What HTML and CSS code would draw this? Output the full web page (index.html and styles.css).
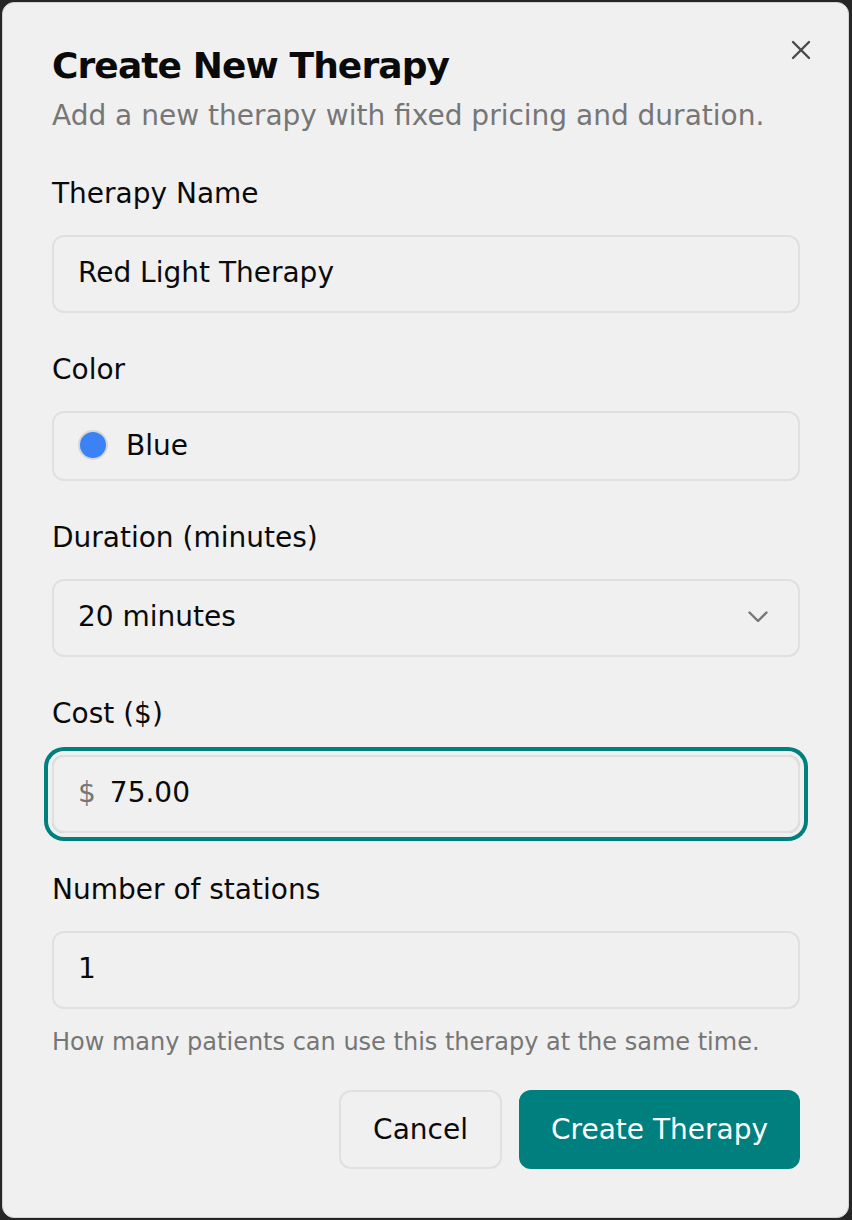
FILE: index.html
```html
<!DOCTYPE html>
<html lang="en">
<head>
<meta charset="utf-8">
<title>Create New Therapy</title>
<link rel="stylesheet" href="styles.css">
</head>
<body>
<div class="dialog" role="dialog" aria-labelledby="dlg-title">
  <button class="close" type="button" aria-label="Close">
    <svg width="20" height="20" viewBox="0 0 20 20" fill="none" stroke="currentColor" stroke-width="2.4" stroke-linecap="round">
      <line x1="2" y1="2" x2="18" y2="18"/>
      <line x1="18" y1="2" x2="2" y2="18"/>
    </svg>
  </button>
  <header class="dialog-header">
    <h2 id="dlg-title" class="dialog-title">Create New Therapy</h2>
    <p class="dialog-desc">Add a new therapy with fixed pricing and duration.</p>
  </header>
  <form class="form">
    <div class="field">
      <label class="label" for="name">Therapy Name</label>
      <input class="input" id="name" type="text" value="Red Light Therapy">
    </div>
    <div class="field">
      <span class="label">Color</span>
      <button type="button" class="color-select">
        <span class="swatch"></span>
        <span>Blue</span>
      </button>
    </div>
    <div class="field">
      <span class="label">Duration (minutes)</span>
      <button type="button" class="select">
        <span>20 minutes</span>
        <svg class="chevron" width="20" height="12" viewBox="0 0 20 12" fill="none" stroke="currentColor" stroke-width="2.4" stroke-linecap="round" stroke-linejoin="round">
          <polyline points="1.5,1.5 10,10 18.5,1.5"/>
        </svg>
      </button>
    </div>
    <div class="field">
      <label class="label" for="cost">Cost ($)</label>
      <div class="input-group focused">
        <span class="prefix">$</span>
        <input class="bare-input" id="cost" type="text" value="75.00">
      </div>
    </div>
    <div class="field">
      <label class="label" for="stations">Number of stations</label>
      <input class="input" id="stations" type="text" value="1">
      <p class="help">How many patients can use this therapy at the same time.</p>
    </div>
  </form>
  <footer class="actions">
    <button type="button" class="btn btn-outline">Cancel</button>
    <button type="button" class="btn btn-primary">Create Therapy</button>
  </footer>
</div>
</body>
</html>
```
FILE: styles.css
```css
* { box-sizing: border-box; }

html, body {
  margin: 0;
  padding: 0;
}

body {
  background: #262626;
  width: 852px;
  height: 1220px;
  overflow: hidden;
  font-family: "DejaVu Sans", "Noto Sans", sans-serif;
  color: #0a0a0a;
  padding: 2px;
}

.dialog {
  position: relative;
  width: 847px;
  height: 1216px;
  background: #f0f0f0;
  border: 1px solid #d2d2d2;
  border-radius: 12px;
  padding: 45px 48px 0 49px;
  display: flex;
  flex-direction: column;
}

.close {
  position: absolute;
  top: 37px;
  right: 37px;
  width: 20px;
  height: 20px;
  padding: 0;
  border: 0;
  background: none;
  color: #4a4a4a;
  display: flex;
}

.dialog-header {
  display: flex;
  flex-direction: column;
  gap: 12px;
}

.dialog-title {
  margin: 0;
  font-size: 36px;
  line-height: 36px;
  font-weight: 700;
  letter-spacing: -0.9px;
  color: #0a0a0a;
}

.dialog-desc {
  margin: 0;
  font-size: 28px;
  line-height: 40px;
  color: #767676;
}

.form {
  margin-top: 44px;
  display: flex;
  flex-direction: column;
  gap: 43px;
}

.field {
  display: flex;
  flex-direction: column;
}

.label {
  font-size: 28px;
  line-height: 28px;
  margin-bottom: 27px;
  color: #0a0a0a;
}

.input,
.input-group,
.select,
.color-select {
  width: 100%;
  height: 78px;
  border: 2px solid #e0e0e0;
  border-radius: 12px;
  background: transparent;
  font-family: inherit;
  font-size: 28px;
  color: #0a0a0a;
  padding: 0 24px;
  margin: 0;
}

.input {
  outline: none;
  padding-bottom: 3px;
}

.color-select {
  height: 70px;
  display: flex;
  align-items: center;
  gap: 18px;
  text-align: left;
  padding-bottom: 2px;
}

.swatch {
  width: 30px;
  height: 30px;
  border-radius: 50%;
  background: #3b82f6;
  border: 2px solid #d6d6d6;
  flex: none;
}

.select {
  display: flex;
  align-items: center;
  justify-content: space-between;
  padding-right: 30px;
  padding-bottom: 3px;
  text-align: left;
}

.chevron {
  color: #767676;
  flex: none;
}

.input-group {
  display: flex;
  align-items: center;
  gap: 14px;
  padding-bottom: 3px;
}

.input-group.focused {
  box-shadow: 0 0 0 4px #f0f0f0, 0 0 0 8px #007f7f;
}

.prefix {
  color: #767676;
}

.bare-input {
  flex: 1;
  min-width: 0;
  border: 0;
  outline: none;
  background: transparent;
  font-family: inherit;
  font-size: 28px;
  color: #0a0a0a;
  padding: 0;
}

.help {
  margin: 17px 0 0;
  font-size: 24px;
  line-height: 32px;
  color: #767676;
}

.actions {
  margin-top: 32px;
  display: flex;
  justify-content: flex-end;
  gap: 17px;
}

.btn {
  height: 79px;
  border-radius: 12px;
  font-family: inherit;
  font-size: 28px;
  padding: 0 30px;
  border: 2px solid transparent;
}

.btn-outline {
  background: transparent;
  border-color: #e0e0e0;
  color: #0a0a0a;
  padding: 0 32px;
}

.btn-primary {
  background: #007f7f;
  border-color: #007f7f;
  color: #ffffff;
}
```
